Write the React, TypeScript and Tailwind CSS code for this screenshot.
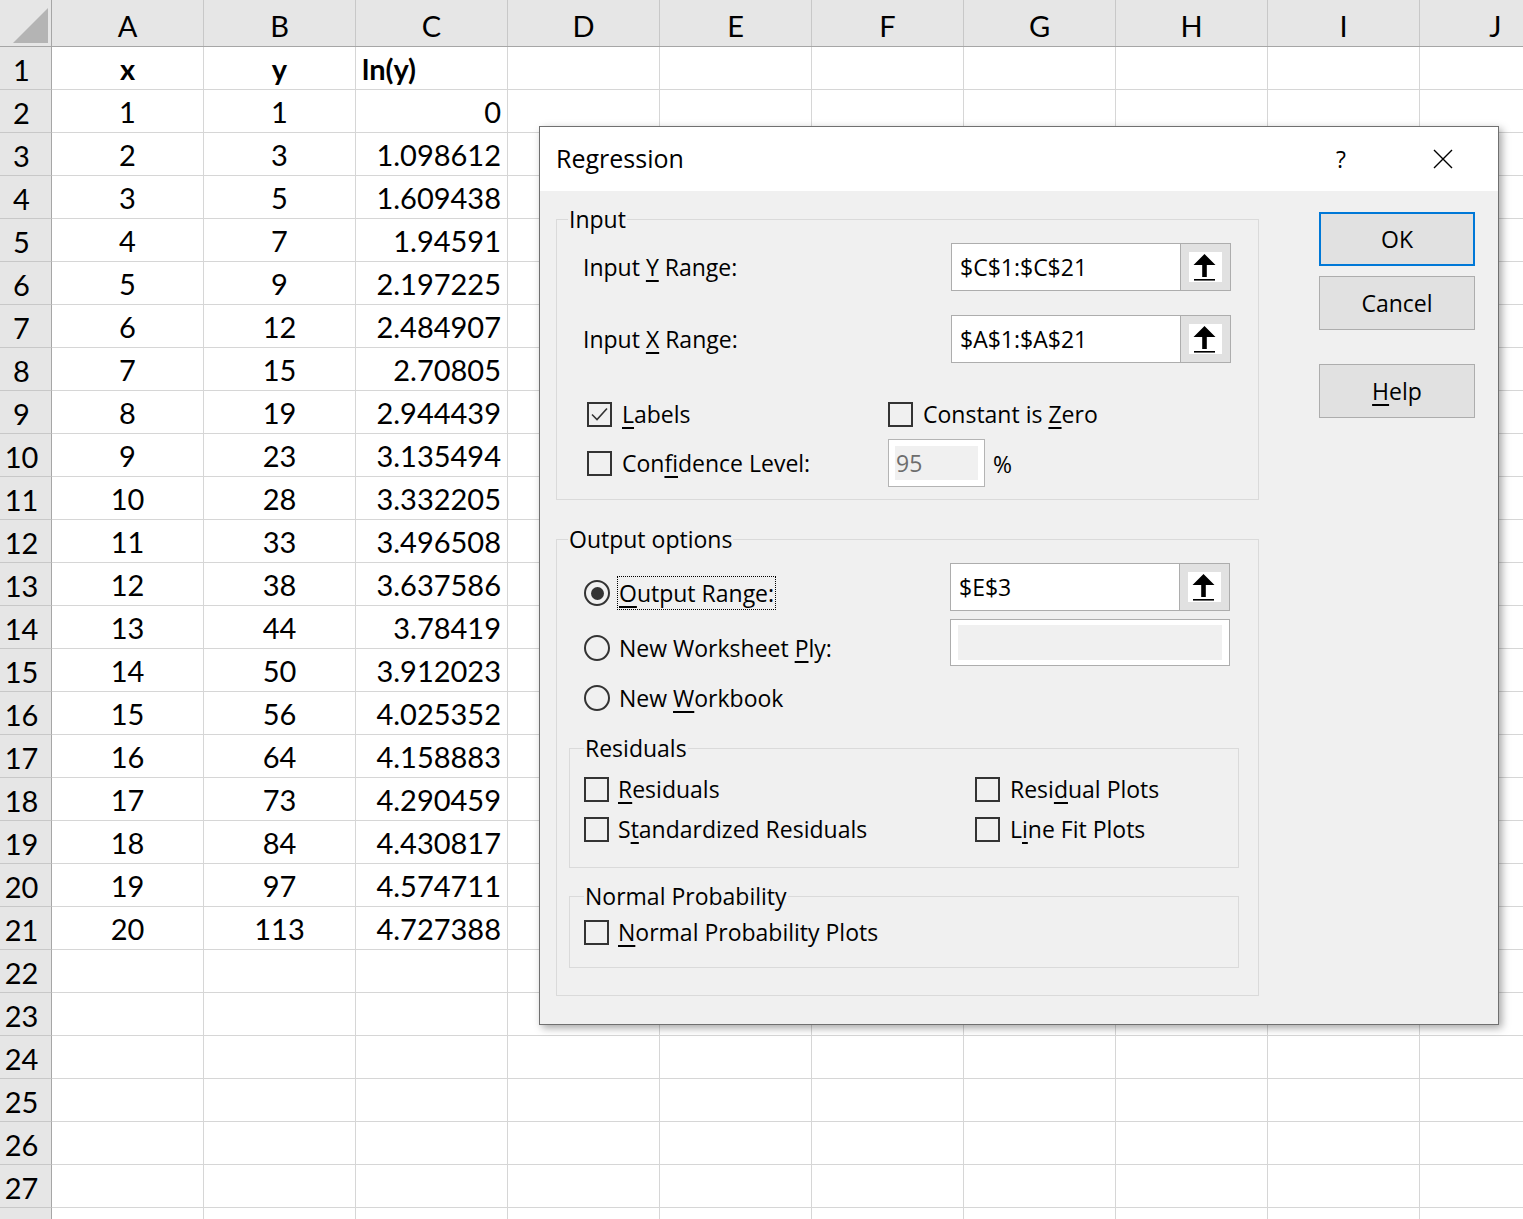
import React from "react";

const COLS = ["A", "B", "C", "D", "E", "F", "G", "H", "I", "J"];

const YS = [1, 3, 5, 7, 9, 12, 15, 19, 23, 28, 33, 38, 44, 50, 56, 64, 73, 84, 97, 113];
const LN = [
  "0", "1.098612", "1.609438", "1.94591", "2.197225", "2.484907", "2.70805",
  "2.944439", "3.135494", "3.332205", "3.496508", "3.637586", "3.78419",
  "3.912023", "4.025352", "4.158883", "4.290459", "4.430817", "4.574711", "4.727388",
];

function cellsFor(row: number): string[] {
  if (row === 1) return ["x", "y", "ln(y)"];
  if (row >= 2 && row <= 21) {
    const i = row - 2;
    return [String(i + 1), String(YS[i]), LN[i]];
  }
  return [];
}

function SheetRow({ row }: { row: number }) {
  const cells = cellsFor(row);
  const bold = row === 1;
  return (
    <div className="flex h-[43px] shrink-0">
      <div className="w-[52px] shrink-0 bg-[#e6e6e6] border-r border-b border-r-[#a6a6a6] border-b-[#c8c8c8] flex items-center justify-center pr-[8px] pt-[3px]">
        {row <= 27 ? row : ""}
      </div>
      {COLS.map((c, i) => {
        const v = cells[i] ?? "";
        let align = "justify-center";
        if (i === 2) align = bold ? "justify-start pl-[6px]" : "justify-end pr-[6px]";
        return (
          <div
            key={c}
            className={`w-[152px] shrink-0 border-r border-b border-[#d6d6d6] flex items-center pt-[2px] ${align} ${bold ? "font-bold" : ""}`}
          >
            {v}
          </div>
        );
      })}
    </div>
  );
}

function ArrowIcon() {
  return (
    <svg width="33" height="30" viewBox="0 0 33 30">
      <rect width="33" height="30" fill="#fff" />
      <path d="M15.5 2 L26.5 13 L17.8 13 L17.8 25 L13.2 25 L13.2 13 L4.5 13 Z" fill="#000" />
      <rect x="5" y="27" width="21" height="1.6" fill="#000" />
    </svg>
  );
}

function RangeField({ value }: { value: string }) {
  return (
    <div className="flex w-[280px] h-[48px] border border-[#adadad] bg-white">
      <div className="flex-1 flex items-center pl-[8px]">{value}</div>
      <div className="w-[50px] flex items-center justify-center bg-[#e1e1e1] border-l border-[#adadad]">
        <ArrowIcon />
      </div>
    </div>
  );
}

function CheckBox({ checked }: { checked?: boolean }) {
  return (
    <span className="w-[25px] h-[25px] shrink-0 border-2 border-[#333] flex items-center justify-center">
      {checked && (
        <svg width="21" height="21" viewBox="0 0 21 21">
          <path d="M3 10.5 L8 15.5 L18 4.5" stroke="#333" strokeWidth="1.6" fill="none" />
        </svg>
      )}
    </span>
  );
}

function Radio({ checked }: { checked?: boolean }) {
  return (
    <span className="w-[26px] h-[26px] shrink-0 rounded-full border-2 border-[#333] flex items-center justify-center">
      {checked && <span className="w-[13px] h-[13px] rounded-full bg-[#333]" />}
    </span>
  );
}

function Key({ children }: { children: React.ReactNode }) {
  return <u className="underline decoration-[1.5px] underline-offset-[4px]">{children}</u>;
}

function Button({
  children,
  primary,
  className,
}: {
  children: React.ReactNode;
  primary?: boolean;
  className?: string;
}) {
  return (
    <div
      className={`w-[156px] h-[54px] flex items-center justify-center bg-[#e1e1e1] ${
        primary ? "border-2 border-[#0078d7]" : "border border-[#adadad]"
      } ${className ?? ""}`}
    >
      {children}
    </div>
  );
}

function Legend({ children, ml }: { children: React.ReactNode; ml: string }) {
  return <legend className={`${ml} px-[1px] leading-[30px]`}>{children}</legend>;
}

function RegressionDialog() {
  return (
    <div className="absolute left-[539px] top-[126px] w-[960px] h-[899px] border border-[#707070] shadow-[3px_3px_8px_rgba(0,0,0,0.35)] flex flex-col font-['Open_Sans',sans-serif] text-[23px] text-black">
      <div className="h-[64px] bg-white flex items-center pl-[16px] shrink-0">
        <span className="text-[25px] flex-1">Regression</span>
        <span className="text-[23px] w-[20px] text-center">?</span>
        <span className="ml-[82px] mr-[45px] flex items-center">
          <svg width="20" height="20" viewBox="0 0 20 20">
            <path d="M1 1 L19 19 M19 1 L1 19" stroke="#000" strokeWidth="1.4" />
          </svg>
        </span>
      </div>

      <div className="flex-1 bg-[#f0f0f0] flex">
        <div className="w-[703px] ml-[16px] pt-[13px] flex flex-col">
          {/* Input */}
          <fieldset className="border border-[#dadada] h-[296px]">
            <Legend ml="ml-[11px]">Input</Legend>
            <div className="flex flex-col pl-[26px] pr-[27px]">
              <div className="flex items-center justify-between h-[48px] mt-[9px]">
                <span>
                  Input <Key>Y</Key> Range:
                </span>
                <RangeField value="$C$1:$C$21" />
              </div>
              <div className="flex items-center justify-between h-[48px] mt-[24px]">
                <span>
                  Input <Key>X</Key> Range:
                </span>
                <RangeField value="$A$1:$A$21" />
              </div>
              <div className="flex items-center h-[25px] mt-[39px]">
                <div className="w-[305px] flex items-center gap-[10px] pl-[4px]">
                  <CheckBox checked />
                  <span>
                    <Key>L</Key>abels
                  </span>
                </div>
                <div className="flex items-center gap-[10px]">
                  <CheckBox />
                  <span>
                    Constant is <Key>Z</Key>ero
                  </span>
                </div>
              </div>
              <div className="flex items-center h-[48px] mt-[12px]">
                <div className="w-[305px] flex items-center gap-[10px] pl-[4px]">
                  <CheckBox />
                  <span>
                    Con<Key>f</Key>idence Level:
                  </span>
                </div>
                <div className="w-[97px] h-[48px] border border-[#b4b4b4] bg-white p-[6px] flex">
                  <div className="flex-1 bg-[#f0f0f0] flex items-center pl-[1px] text-[#6d6d6d]">95</div>
                </div>
                <span className="ml-[8px] mt-[2px]">%</span>
              </div>
            </div>
          </fieldset>

          {/* Output options */}
          <fieldset className="border border-[#dadada] h-[472px] mt-[24px]">
            <Legend ml="ml-[11px]">Output options</Legend>
            <div className="flex flex-col">
              <div className="flex items-start justify-between h-[47px] mt-[9px] pl-[27px] pr-[28px]">
                <div className="flex items-center gap-[7px] mt-[13px]">
                  <Radio checked />
                  <span className="border border-dotted border-black px-[1px] leading-[32px]">
                    <Key>O</Key>utput Range:
                  </span>
                </div>
                <RangeField value="$E$3" />
              </div>
              <div className="flex items-start justify-between h-[47px] mt-[9px] pl-[27px] pr-[28px]">
                <div className="flex items-center gap-[9px] mt-[12px]">
                  <Radio />
                  <span>
                    New Worksheet <Key>P</Key>ly:
                  </span>
                </div>
                <div className="w-[280px] h-[47px] border border-[#adadad] bg-white px-[7px] py-[5px] flex">
                  <div className="flex-1 bg-[#f0f0f0]" />
                </div>
              </div>
              <div className="flex items-center h-[26px] mt-[19px] pl-[27px] gap-[9px]">
                <Radio />
                <span>
                  New <Key>W</Key>orkbook
                </span>
              </div>

              <fieldset className="border border-[#dadada] h-[135px] mt-[22px] ml-[12px] w-[670px]">
                <Legend ml="ml-[14px]">Residuals</Legend>
                <div className="flex flex-col pl-[14px]">
                  <div className="flex items-center h-[25px] mt-[14px]">
                    <div className="w-[391px] flex items-center gap-[9px]">
                      <CheckBox />
                      <span>
                        <Key>R</Key>esiduals
                      </span>
                    </div>
                    <div className="flex items-center gap-[10px]">
                      <CheckBox />
                      <span>
                        Resi<Key>d</Key>ual Plots
                      </span>
                    </div>
                  </div>
                  <div className="flex items-center h-[25px] mt-[15px]">
                    <div className="w-[391px] flex items-center gap-[9px]">
                      <CheckBox />
                      <span>
                        S<Key>t</Key>andardized Residuals
                      </span>
                    </div>
                    <div className="flex items-center gap-[10px]">
                      <CheckBox />
                      <span>
                        L<Key>i</Key>ne Fit Plots
                      </span>
                    </div>
                  </div>
                </div>
              </fieldset>

              <fieldset className="border border-[#dadada] h-[87px] mt-[13px] ml-[12px] w-[670px]">
                <Legend ml="ml-[14px]">Normal Probability</Legend>
                <div className="flex items-center h-[25px] mt-[9px] pl-[14px] gap-[9px]">
                  <CheckBox />
                  <span>
                    <Key>N</Key>ormal Probability Plots
                  </span>
                </div>
              </fieldset>
            </div>
          </fieldset>
        </div>

        <div className="ml-[60px] flex flex-col pt-[21px]">
          <Button primary>OK</Button>
          <Button className="mt-[10px]">Cancel</Button>
          <Button className="mt-[34px]">
            <span>
              <Key>H</Key>elp
            </span>
          </Button>
        </div>
      </div>
    </div>
  );
}

export default function App() {
  const rows = Array.from({ length: 28 }, (_, i) => i + 1);
  return (
    <div className="relative w-[1523px] h-[1219px] overflow-hidden bg-white font-['Lato',sans-serif] text-[29px] text-black">
      {/* column headers */}
      <div className="flex h-[47px] bg-[#e6e6e6] border-b border-[#a6a6a6]">
        <div className="w-[52px] shrink-0 border-r border-[#a6a6a6] relative">
          <svg className="absolute left-[13px] top-[8px]" width="36" height="36" viewBox="0 0 36 36">
            <path d="M35 0 L35 35 L0 35 Z" fill="#b4b4b4" />
          </svg>
        </div>
        {COLS.map((c) => (
          <div
            key={c}
            className="w-[152px] shrink-0 border-r border-[#c8c8c8] flex items-center justify-center pt-[5px]"
          >
            {c}
          </div>
        ))}
      </div>
      <div className="flex flex-col">
        {rows.map((r) => (
          <SheetRow key={r} row={r} />
        ))}
      </div>
      <RegressionDialog />
    </div>
  );
}
